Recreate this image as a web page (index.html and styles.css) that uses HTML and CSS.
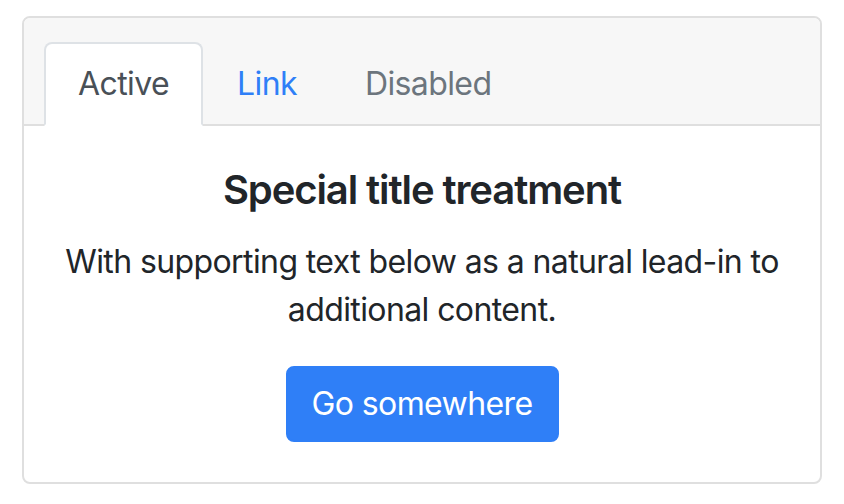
FILE: index.html
```html
<!DOCTYPE html>
<html>
<head>
<meta charset="utf-8">
<link rel="stylesheet" href="styles.css">
</head>
<body>
<div class="card">
  <div class="card-header">
    <ul class="tabs">
      <li><a class="tab active">Active</a></li>
      <li><a class="tab link">Link</a></li>
      <li><a class="tab disabled">Disabled</a></li>
    </ul>
  </div>
  <div class="card-body">
    <h5 class="title">Special title treatment</h5>
    <p class="text">With supporting text below as a natural lead-in to additional content.</p>
    <a class="btn">Go somewhere</a>
  </div>
</div>
</body>
</html>
```
FILE: styles.css
```css
html, body { margin: 0; padding: 0; background: #fff; }
body {
  font-family: Inter, "Noto Sans", "Liberation Sans", sans-serif;
  font-size: 32px;
  line-height: 1.5;
  letter-spacing: -0.6px;
  color: #212529;
  padding: 16px 22px 20px 22px;
}
.card {
  border: 2px solid #dfdfdf;
  border-radius: 8px;
  overflow: hidden;
  text-align: center;
}
.card-header {
  background: #f7f7f7;
  border-bottom: 2px solid #dfdfdf;
  padding: 24px 40px 0 40px;
}
.tabs {
  list-style: none;
  margin: 0 -20px -2px -20px;
  padding: 0;
  display: flex;
}
.tab {
  display: block;
  padding: 16px 32px;
  border: 2px solid transparent;
  border-radius: 8px 8px 0 0;
  text-decoration: none;
}
.tab.active {
  color: #495057;
  background: #fff;
  border-color: #dee2e6 #dee2e6 #fff;
}
.tab.link { color: #2f7ff7; }
.tab.disabled { color: #6c757d; }
.card-body { padding: 40px; }
.title {
  margin: 0 0 24px 0;
  font-size: 40px;
  font-weight: 600;
  line-height: 1.2;
  letter-spacing: -1.1px;
}
.text { margin: 0 0 32px 0; }
.btn {
  display: inline-block;
  color: #fff;
  background: #2f7ff7;
  border: 2px solid #2f7ff7;
  border-radius: 8px;
  padding: 12px 24px;
  line-height: 48px;
}
```
